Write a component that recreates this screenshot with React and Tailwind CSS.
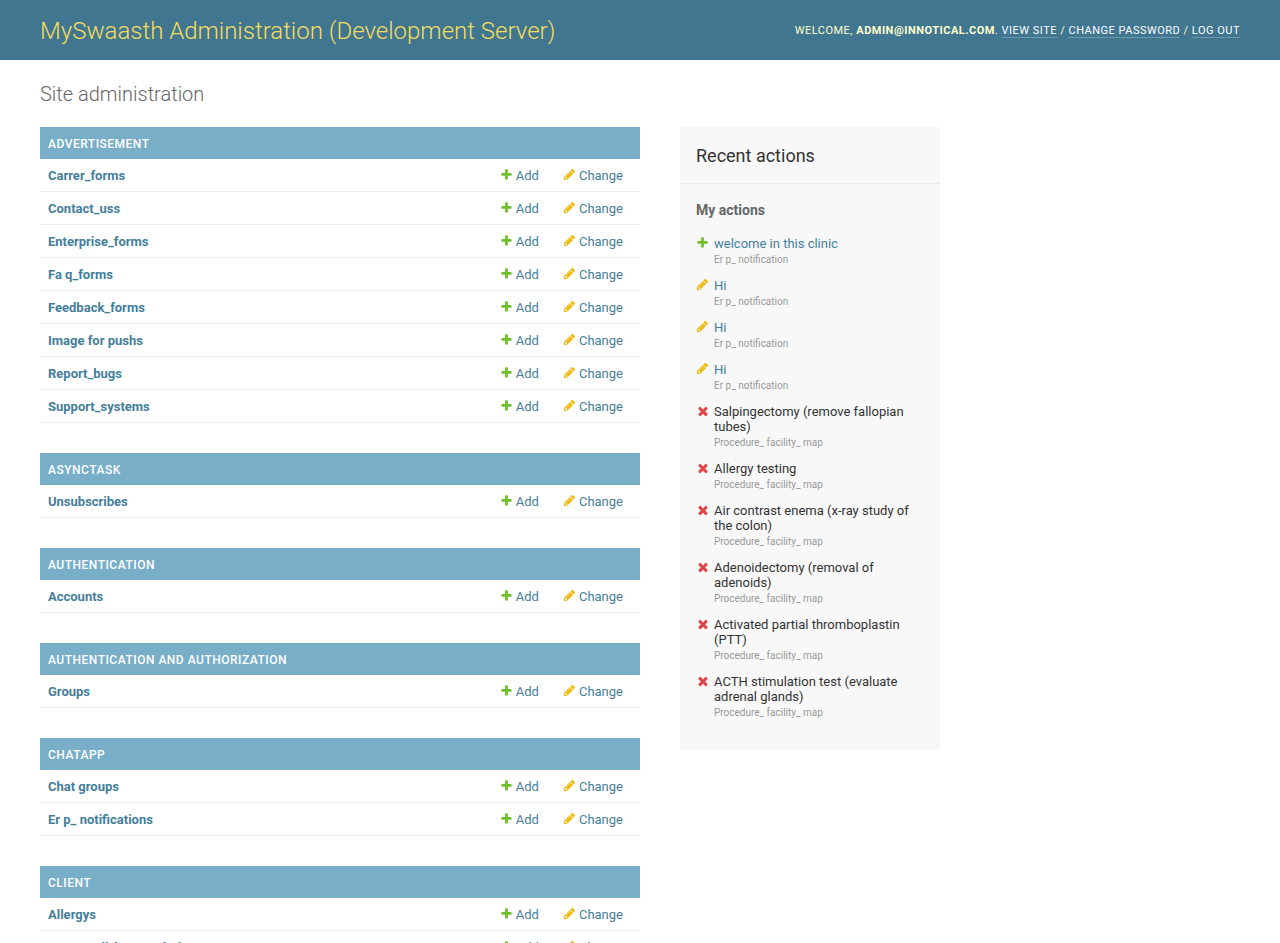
import React from "react";

const modules = [
  {
    name: "Advertisement",
    models: [
      "Carrer_forms",
      "Contact_uss",
      "Enterprise_forms",
      "Fa q_forms",
      "Feedback_forms",
      "Image for pushs",
      "Report_bugs",
      "Support_systems",
    ],
  },
  { name: "Asynctask", models: ["Unsubscribes"] },
  { name: "Authentication", models: ["Accounts"] },
  { name: "Authentication and Authorization", models: ["Groups"] },
  { name: "Chatapp", models: ["Chat groups", "Er p_ notifications"] },
  { name: "Client", models: ["Allergys", "Areas_call_logs_mahol"] },
];

const actions = [
  { kind: "add", title: "welcome in this clinic", model: "Er p_ notification" },
  { kind: "change", title: "Hi", model: "Er p_ notification" },
  { kind: "change", title: "Hi", model: "Er p_ notification" },
  { kind: "change", title: "Hi", model: "Er p_ notification" },
  { kind: "delete", title: "Salpingectomy (remove fallopian tubes)", model: "Procedure_ facility_ map" },
  { kind: "delete", title: "Allergy testing", model: "Procedure_ facility_ map" },
  { kind: "delete", title: "Air contrast enema (x-ray study of the colon)", model: "Procedure_ facility_ map" },
  { kind: "delete", title: "Adenoidectomy (removal of adenoids)", model: "Procedure_ facility_ map" },
  { kind: "delete", title: "Activated partial thromboplastin (PTT)", model: "Procedure_ facility_ map" },
  { kind: "delete", title: "ACTH stimulation test (evaluate adrenal glands)", model: "Procedure_ facility_ map" },
];

const icons = {
  add: {
    fill: "#70bf2b",
    size: 13,
    d: "M1600 796v192q0 40-28 68t-68 28h-416v416q0 40-28 68t-68 28h-192q-40 0-68-28t-28-68v-416h-416q-40 0-68-28t-28-68v-192q0-40 28-68t68-28h416v-416q0-40 28-68t68-28h192q40 0 68 28t28 68v416h416q40 0 68 28t28 68z",
  },
  change: {
    fill: "#efb80b",
    size: 13,
    d: "M491 1536l91-91-235-235-91 91v107h128v128h107zm523-928q0-22-22-22-10 0-17 7l-542 542q-7 7-7 17 0 22 22 22 10 0 17-7l542-542q7-7 7-17zm-54-192l416 416-832 832h-416v-416zm683 96q0 53-37 90l-166 166-416-416 166-165q36-38 90-38 53 0 91 38l235 234q37 39 37 91z",
  },
  delete: {
    fill: "#dd4646",
    size: 14,
    d: "M1490 1322q0 40-28 68l-136 136q-28 28-68 28t-68-28l-294-294-294 294q-28 28-68 28t-68-28l-136-136q-28-28-28-68t28-68l294-294-294-294q-28-28-28-68t28-68l136-136q28-28 68-28t68 28l294 294 294-294q28-28 68-28t68 28l136 136q28 28 28 68t-28 68l-294 294 294 294q28 28 28 68z",
  },
};

function Icon({ kind }) {
  const { fill, size, d } = icons[kind];
  return (
    <svg width={size} height={size} viewBox="0 0 1792 1792" aria-hidden="true" className="shrink-0">
      <path fill={fill} d={d} />
    </svg>
  );
}

function RowLink({ kind, children }) {
  return (
    <a href="#" className="flex items-start text-[#447e9b]">
      <span className="w-4 shrink-0">
        <Icon kind={kind} />
      </span>
      {children}
    </a>
  );
}

function Module({ name, models }) {
  return (
    <table className="mb-[30px] w-full border-collapse text-[13px] leading-4">
      <caption className="bg-[#79aec8] px-2 pt-[9px] pb-[7px] text-left text-xs leading-4 font-medium tracking-[0.5px] text-white uppercase">
        <a href="#">{name}</a>
      </caption>
      <tbody>
        {models.map((m) => (
          <tr key={m} className="border-b border-[#eee]">
            <th scope="row" className="w-full px-2 pt-[9px] pb-[7px] text-left font-bold text-[#447e9b]">
              <a href="#">{m}</a>
            </th>
            <td className="px-2 pt-[9px] pb-[7px] whitespace-nowrap">
              <RowLink kind="add">Add</RowLink>
            </td>
            <td className="pt-[9px] pr-[17px] pb-[7px] pl-4 whitespace-nowrap">
              <RowLink kind="change">Change</RowLink>
            </td>
          </tr>
        ))}
      </tbody>
    </table>
  );
}

export default function App() {
  return (
    <div className="bg-white font-[Roboto,sans-serif] text-[13px] leading-4 text-[#333]">
      <header className="flex items-center justify-between bg-[#417690] px-10 pt-4 pb-[14px] text-[#ffc]">
        <h1 className="text-2xl leading-[30px] font-[350] text-[#f5dd5d]">
          <a href="#">MySwaasth Administration (Development Server)</a>
        </h1>
        <nav className="text-[11px] leading-4 font-normal tracking-[0.5px] uppercase">
          Welcome, <strong className="font-bold">admin@innotical.com</strong>.{" "}
          <a href="#" className="border-b border-white/25 text-white">View site</a> /{" "}
          <a href="#" className="border-b border-white/25 text-white">Change password</a> /{" "}
          <a href="#" className="border-b border-white/25 text-white">Log out</a>
        </nav>
      </header>
      <main className="px-10 pt-[21px]">
        <h2 className="mb-[19px] text-xl leading-[27px] font-[350] text-[#666]">Site administration</h2>
        <div className="flex items-start gap-10">
          <div className="w-[600px]">
            {modules.map((m) => (
              <Module key={m.name} {...m} />
            ))}
          </div>
          <aside className="w-[260px] bg-[#f8f8f8] pb-[19px]">
            <h2 className="border-b border-[#eaeaea] px-4 pt-[19px] pb-[17px] text-lg leading-5">Recent actions</h2>
            <h3 className="mx-4 mt-[18px] mb-[18px] text-sm leading-4 font-bold text-[#666]">My actions</h3>
            <ul className="px-4">
              {actions.map((a, i) => (
                <li key={i} className="flex pb-[11px]">
                  <span className="w-[18px] shrink-0">
                    <Icon kind={a.kind} />
                  </span>
                  <div className="leading-[15px]">
                    {a.kind === "delete" ? (
                      <span>{a.title}</span>
                    ) : (
                      <a href="#" className="text-[#447e9b]">{a.title}</a>
                    )}
                    <div className="mt-px text-[10px] text-[#999]">{a.model}</div>
                  </div>
                </li>
              ))}
            </ul>
          </aside>
        </div>
      </main>
    </div>
  );
}
